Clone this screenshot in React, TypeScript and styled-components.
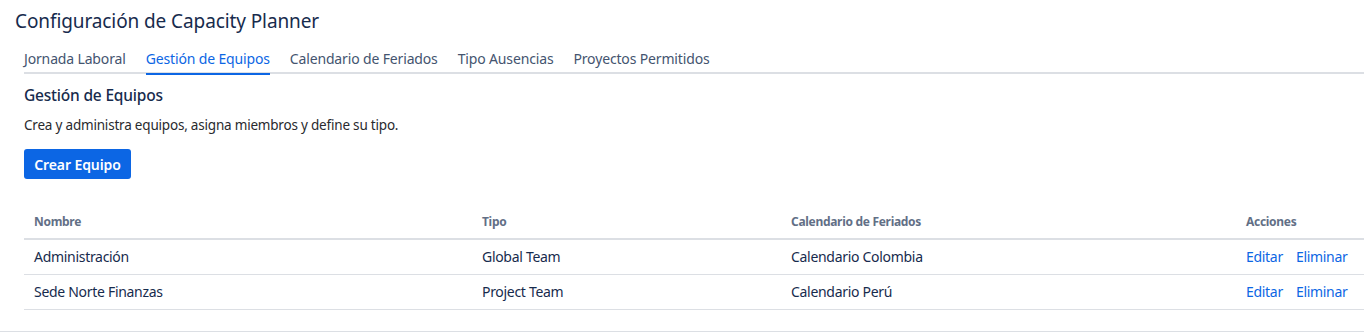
import React from 'react';
import styled, { createGlobalStyle } from 'styled-components';

const GlobalStyle = createGlobalStyle`
  html, body {
    margin: 0;
    padding: 0;
    background: #ffffff;
    font-family: "Noto Sans", "Open Sans", sans-serif;
    color: #172b4d;
  }
  * { box-sizing: border-box; }
`;

const Page = styled.div`
  width: 1364px;
  height: 332px;
  overflow: hidden;
  border-bottom: 1px solid #dcdfe4;
`;

const Title = styled.h1`
  margin: 0;
  padding: 8px 0 0 15px;
  height: 45px;
  font-size: 19px;
  font-weight: 400;
  line-height: 26px;
  letter-spacing: -0.1px;
  color: #172b4d;
`;

const Content = styled.div`
  padding-left: 24px;
`;

const TabList = styled.div`
  display: flex;
  gap: 20px;
  border-bottom: 2px solid #dcdfe4;
  height: 29px;
`;

const Tab = styled.button<{ $active?: boolean }>`
  all: unset;
  position: relative;
  font-family: inherit;
  font-size: 14px;
  line-height: 28px;
  letter-spacing: -0.15px;
  color: ${p => (p.$active ? '#0c66e4' : '#44546f')};
  cursor: pointer;

  &::after {
    content: '';
    position: absolute;
    left: 0;
    right: 0;
    bottom: -3px;
    height: 2px;
    background: ${p => (p.$active ? '#0c66e4' : 'transparent')};
  }
`;

const SectionTitle = styled.h2`
  margin: 9px 0 0;
  font-size: 15.5px;
  font-weight: 500;
  line-height: 24px;
  letter-spacing: -0.2px;
  color: #172b4d;
`;

const Description = styled.p`
  margin: 8px 0 0;
  font-size: 13.5px;
  line-height: 20px;
  letter-spacing: -0.2px;
  color: #292a2e;
`;

const PrimaryButton = styled.button`
  margin-top: 14px;
  height: 30px;
  width: 107px;
  border: none;
  border-radius: 3px;
  background: #0c66e4;
  color: #ffffff;
  font-family: inherit;
  font-size: 14px;
  font-weight: 600;
  letter-spacing: -0.1px;
  cursor: pointer;
`;

const Table = styled.table`
  margin-top: 25px;
  width: 1340px;
  border-collapse: collapse;
  table-layout: fixed;
`;

const HeadCell = styled.th<{ $w: number }>`
  width: ${p => p.$w}px;
  text-align: left;
  padding: 0 10px;
  height: 35px;
  font-size: 12px;
  font-weight: 700;
  letter-spacing: -0.3px;
  color: #626f86;
  border-bottom: 2px solid #dcdfe4;
`;

const Cell = styled.td`
  padding: 0 10px;
  height: 35px;
  font-size: 14px;
  letter-spacing: -0.3px;
  color: #172b4d;
  border-bottom: 1px solid #dcdfe4;
  white-space: nowrap;
`;

const Actions = styled.div`
  display: flex;
  gap: 13px;
`;

const LinkButton = styled.a`
  color: #0c66e4;
  text-decoration: none;
  cursor: pointer;
`;

const tabs = ['Jornada Laboral', 'Gestión de Equipos', 'Calendario de Feriados', 'Tipo Ausencias', 'Proyectos Permitidos'];

const teams = [
  { name: 'Administración', type: 'Global Team', calendar: 'Calendario Colombia' },
  { name: 'Sede Norte Finanzas', type: 'Project Team', calendar: 'Calendario Perú' },
];

export default function App() {
  return (
    <>
      <GlobalStyle />
      <Page>
        <Title>Configuración de Capacity Planner</Title>
        <Content>
          <TabList>
            {tabs.map(t => (
              <Tab key={t} $active={t === 'Gestión de Equipos'}>
                {t}
              </Tab>
            ))}
          </TabList>
          <SectionTitle>Gestión de Equipos</SectionTitle>
          <Description>Crea y administra equipos, asigna miembros y define su tipo.</Description>
          <PrimaryButton>Crear Equipo</PrimaryButton>
          <Table>
            <thead>
              <tr>
                <HeadCell $w={448}>Nombre</HeadCell>
                <HeadCell $w={309}>Tipo</HeadCell>
                <HeadCell $w={455}>Calendario de Feriados</HeadCell>
                <HeadCell $w={128}>Acciones</HeadCell>
              </tr>
            </thead>
            <tbody>
              {teams.map(team => (
                <tr key={team.name}>
                  <Cell>{team.name}</Cell>
                  <Cell>{team.type}</Cell>
                  <Cell>{team.calendar}</Cell>
                  <Cell>
                    <Actions>
                      <LinkButton>Editar</LinkButton>
                      <LinkButton>Eliminar</LinkButton>
                    </Actions>
                  </Cell>
                </tr>
              ))}
            </tbody>
          </Table>
        </Content>
      </Page>
    </>
  );
}
